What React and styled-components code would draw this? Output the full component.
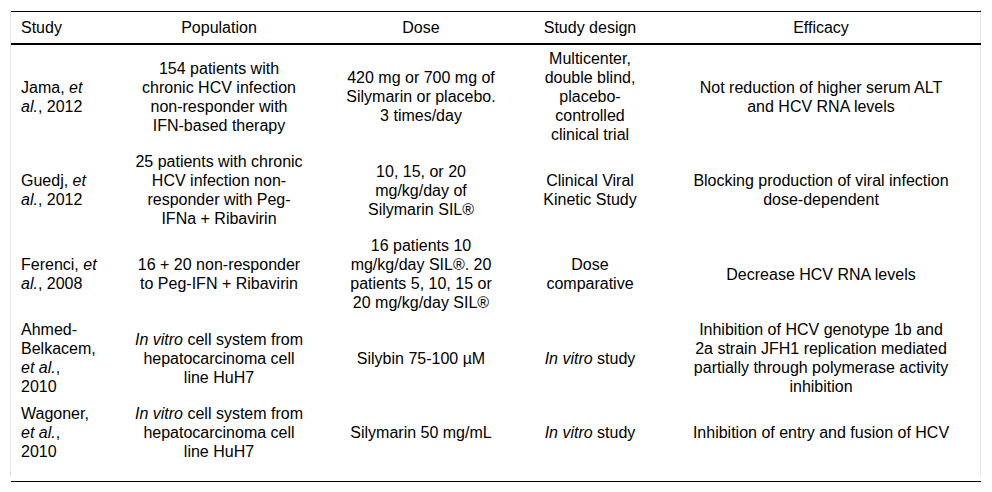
import React from 'react';
import styled, { createGlobalStyle } from 'styled-components';

const GlobalStyle = createGlobalStyle`
  body {
    margin: 0;
    background: #fff;
    font-family: "Liberation Sans", Arial, sans-serif;
    color: #000;
  }
`;

// 열 설정: 너비, 좌우 여백, 정렬
const columns = [
  { key: 'study', title: 'Study', width: 104, pad: '0 17px 0 10px', align: 'left' },
  { key: 'population', title: 'Population', width: 208, pad: '0 18px', align: 'center' },
  { key: 'dose', title: 'Dose', width: 196, pad: '0 20px', align: 'center' },
  { key: 'design', title: 'Study design', width: 142, pad: '0 20px', align: 'center' },
  { key: 'efficacy', title: 'Efficacy', width: 320, pad: '0 30px', align: 'center' },
];

const rows = [
  {
    study: <>Jama, <i>et al.</i>, 2012</>,
    population: '154 patients with chronic HCV infection non-responder with IFN-based therapy',
    dose: '420 mg or 700 mg of Silymarin or placebo. 3 times/day',
    design: 'Multicenter, double blind, placebo-controlled clinical trial',
    efficacy: 'Not reduction of higher serum ALT and HCV RNA levels',
  },
  {
    study: <>Guedj, <i>et al.</i>, 2012</>,
    population: '25 patients with chronic HCV infection non-responder with Peg-IFNa + Ribavirin',
    dose: '10, 15, or 20 mg/kg/day of Silymarin SIL®',
    design: 'Clinical Viral Kinetic Study',
    efficacy: 'Blocking production of viral infection dose-dependent',
  },
  {
    study: <>Ferenci, <i>et al.</i>, 2008</>,
    population: '16 + 20 non-responder to Peg-IFN + Ribavirin',
    dose: '16 patients 10 mg/kg/day SIL®. 20 patients 5, 10, 15 or 20 mg/kg/day SIL®',
    design: 'Dose comparative',
    efficacy: 'Decrease HCV RNA levels',
  },
  {
    study: <>Ahmed-Belkacem, <i>et al.</i>, 2010</>,
    population: <><i>In vitro</i> cell system from hepatocarcinoma cell line HuH7</>,
    dose: 'Silybin 75-100 µM',
    design: <><i>In vitro</i> study</>,
    efficacy: 'Inhibition of HCV genotype 1b and 2a strain JFH1 replication mediated partially through polymerase activity inhibition',
  },
  {
    study: <>Wagoner, <i>et al.</i>, 2010</>,
    population: <><i>In vitro</i> cell system from hepatocarcinoma cell line HuH7</>,
    dose: 'Silymarin 50 mg/mL',
    design: <><i>In vitro</i> study</>,
    efficacy: 'Inhibition of entry and fusion of HCV',
  },
];

const App = () => {
  return (
    <>
      <GlobalStyle />
      <Page>
        <Frame>
          <Table>
            <colgroup>
              {columns.map((col) => (
                <col key={col.key} style={{ width: col.width }} />
              ))}
            </colgroup>
            <thead>
              <tr>
                {columns.map((col) => (
                  <Th key={col.key} $pad={col.pad} $align={col.align}>
                    {col.title}
                  </Th>
                ))}
              </tr>
            </thead>
            <tbody>
              {rows.map((row, index) => (
                <tr key={index}>
                  {columns.map((col) => (
                    <Td key={col.key} $pad={col.pad} $align={col.align}>
                      {row[col.key]}
                    </Td>
                  ))}
                </tr>
              ))}
            </tbody>
          </Table>
        </Frame>
        <BottomRule />
      </Page>
    </>
  );
};

const Page = styled.div`
  padding: 10px 11px 0 10px;
`;

const Frame = styled.div`
  height: 467px;
  padding-top: 1px;
  box-sizing: border-box;
  border-left: 1px solid #e6e6e6;
  border-right: 1px solid #e6e6e6;
`;

const Table = styled.table`
  width: 970px;
  table-layout: fixed;
  border-collapse: collapse;
  border-top: 1px solid #000;
  font-size: 16px;
  line-height: 19px;
`;

const Th = styled.th`
  font-weight: normal;
  text-align: ${(p) => p.$align};
  padding: ${(p) => p.$pad};
  padding-top: 6px;
  padding-bottom: 6px;
  border-bottom: 2px solid #000;
`;

const Td = styled.td`
  text-align: ${(p) => p.$align};
  vertical-align: middle;
  padding: ${(p) => p.$pad};
  padding-top: 4px;
  padding-bottom: 4px;
`;

const BottomRule = styled.div`
  margin: 4px 0 0 1px;
  width: 970px;
  border-top: 1px solid #000;
`;

export default App;
